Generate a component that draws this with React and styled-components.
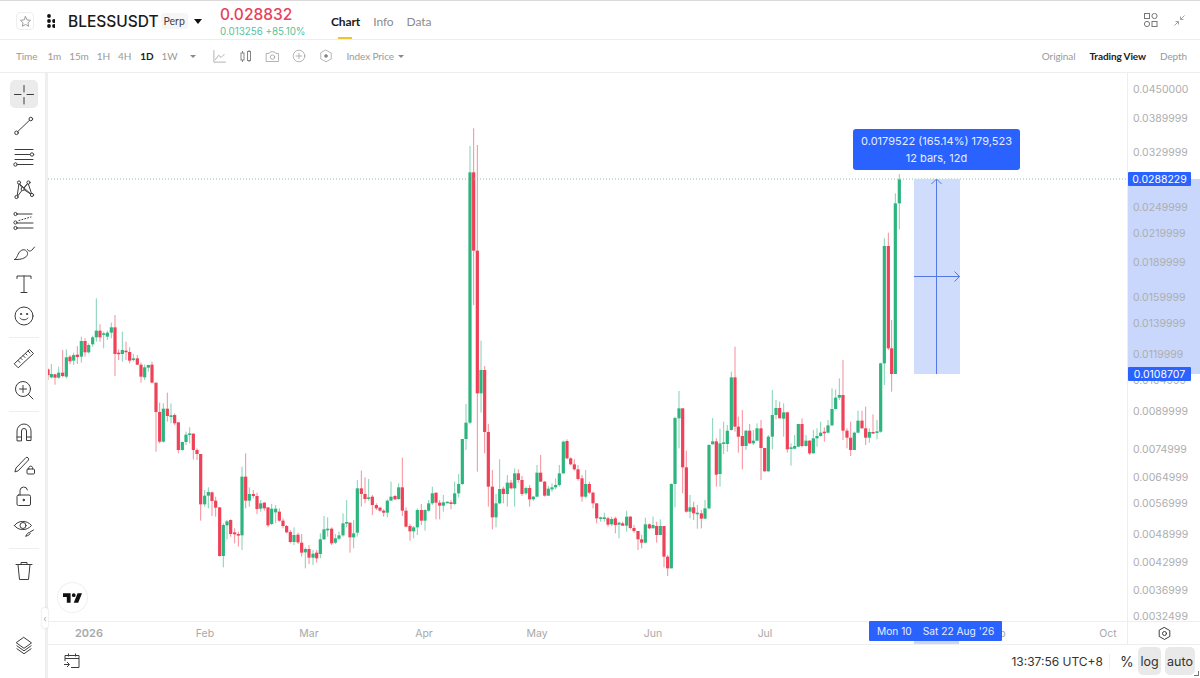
import React from 'react';
import styled, { createGlobalStyle } from 'styled-components';

const GlobalStyle = createGlobalStyle`
  html, body { margin: 0; padding: 0; background: #fff; }
  body { font-family: Inter, "Noto Sans", sans-serif; color: #222; }
  * { box-sizing: border-box; }
`;

const GREEN = '#2eb57f';
const RED = '#ef4258';
const BLUE = '#2962ff';

// candle rows read off the chart: [x, colour, wick top, body top, body bottom, wick bottom]
// each block has its own origin and is stored at 3x, so px = origin + value / 3
const BLOCKS = [
  {
    ox: 48,
    oy: 290,
    rows: [
      [0,'r',235,238,255,270],[10,'g',222,252,262,265],[21,'r',252,253,263,284],[32,'g',230,248,263,266],
      [44,'r',180,248,258,262],[55,'g',178,202,260,265],[66,'r',195,200,214,222],[77,'g',188,195,212,225],
      [88,'r',168,194,201,222],[100,'g',140,153,200,218],[111,'r',145,153,187,200],[122,'g',160,165,187,190],
      [134,'g',137,142,163,170],[145,'g',25,122,142,155],[156,'r',103,122,142,155],[167,'g',125,130,133,175],
      [178,'g',122,128,140,150],[190,'g',98,112,128,145],[201,'r',75,112,192,258],[212,'r',178,188,192,210],
      [223,'g',125,180,192,215],[234,'r',155,182,186,210],[245,'r',172,186,212,220],[256,'g',192,205,210,215],
      [268,'r',195,205,224,225],[279,'r',218,224,260,278],[290,'g',224,232,262,270],[301,'g',224,225,233,245],
      [312,'r',215,224,278,280],[324,'r',278,278,366,485],[335,'r',338,366,455,460],[346,'g',340,356,455,458],
      [358,'r',308,356,378,395],[369,'g',340,376,378,400],[380,'r',370,375,400,405],[391,'r',396,397,480,490],
      [403,'g',455,456,480,482],[414,'g',425,434,456,465],[425,'g',412,430,432,460],[436,'r',430,431,480,508],
      [447,'r',475,480,492,510],[458,'r',492,492,643,692],[470,'g',600,617,643,650],[481,'g',592,606,617,655],
      [492,'r',605,607,633,678],[503,'r',620,632,653,680],[515,'r',652,652,798,800],[526,'g',700,705,798,832],
      [537,'g',690,694,706,748],[548,'r',688,690,732,740],[560,'r',715,727,733,760],[571,'r',725,732,735,770],
      [582,'g',530,560,736,780],[593,'r',490,560,632,655],[604,'g',592,612,632,650],[616,'r',600,612,618,625],
      [627,'r',608,618,657,672],[638,'g',630,640,656,665],[649,'r',636,638,655,662],[660,'r',652,652,706,712],
      [671,'g',642,656,702,705],[683,'g',645,656,667,700],[694,'r',655,665,692,695],[705,'r',685,692,708,715],
      [716,'r',705,708,727,730],[727,'r',720,726,756,760],[738,'g',712,735,756,765],[750,'r',728,734,757,762],
      [761,'r',732,758,788,800],[772,'g',772,777,787,835],[783,'r',765,777,803,822],[795,'g',780,791,803,825],
      [806,'r',780,788,805,818],[817,'g',730,748,792,805],[828,'g',678,718,748,750],[839,'g',682,716,718,740],
      [851,'r',712,716,760,765],[862,'g',732,745,758,762],[873,'g',725,736,746,750],[885,'g',670,700,736,740],
      [896,'g',630,696,698,712],
    ],
  },
  {
    ox: 340,
    oy: 120,
    rows: [
      [30,'r',1208,1208,1252,1298],[41,'g',1200,1240,1252,1285],[52,'g',1080,1105,1238,1250],[64,'r',1052,1105,1122,1160],
      [75,'r',1072,1122,1137,1150],[86,'g',1077,1132,1136,1142],[97,'r',1125,1130,1155,1185],[109,'r',1150,1155,1165,1170],
      [120,'r',1160,1163,1172,1175],[131,'r',1168,1172,1178,1190],[142,'g',1138,1142,1178,1192],[153,'g',1085,1130,1142,1142],
      [165,'r',1125,1128,1138,1140],[176,'g',1090,1102,1137,1140],[187,'r',1013,1102,1172,1188],[198,'r',1162,1172,1220,1222],
      [210,'r',1212,1218,1234,1262],[221,'g',1218,1222,1234,1255],[232,'g',1165,1170,1222,1245],[244,'r',1152,1170,1202,1215],
      [255,'g',1168,1170,1202,1232],[266,'g',1140,1150,1172,1175],[277,'g',1100,1120,1150,1155],[288,'r',1118,1118,1148,1198],
      [299,'r',1140,1148,1157,1198],[310,'g',1125,1147,1157,1175],[322,'g',1145,1145,1148,1150],[333,'r',1140,1147,1152,1168],
      [344,'g',1085,1120,1152,1155],[356,'g',1062,1092,1120,1132],[367,'g',957,957,1092,1095],[378,'g',852,908,957,990],
      [390,'g',78,157,908,912],[401,'r',25,157,392,555],[412,'r',75,392,820,1055],[423,'g',662,750,820,878],
      [434,'r',738,750,936,1000],[445,'r',912,936,1100,1160],[457,'r',1050,1100,1192,1228],[468,'g',1122,1150,1192,1222],
      [479,'g',1018,1107,1150,1152],[490,'r',1100,1106,1122,1150],[502,'g',1065,1088,1122,1160],[513,'r',1080,1088,1105,1108],
      [524,'g',1045,1060,1105,1160],[535,'r',1048,1060,1080,1088],[546,'r',1068,1080,1122,1128],[558,'g',1100,1104,1120,1125],
      [569,'r',1095,1104,1138,1160],[580,'g',1128,1130,1138,1142],[591,'g',1035,1058,1130,1132],[602,'r',1005,1058,1085,1085],
      [614,'r',1083,1085,1127,1130],[625,'g',1098,1106,1127,1128],[636,'g',1090,1102,1108,1115],[647,'g',1075,1095,1102,1108],
      [658,'g',1035,1060,1095,1100],[670,'g',962,965,1060,1062],[681,'r',958,963,1015,1018],[692,'r',1012,1015,1033,1036],
      [703,'r',1018,1033,1048,1052],[714,'r',1035,1048,1077,1082],[726,'r',1065,1075,1130,1145],[737,'g',1050,1092,1130,1135],
      [748,'r',1085,1092,1118,1122],[759,'r',1115,1118,1150,1165],[770,'r',1150,1150,1195,1210],[782,'g',1190,1192,1196,1205],
      [793,'g',1178,1192,1197,1205],[804,'r',1190,1195,1214,1220],[815,'g',1190,1197,1213,1218],[826,'r',1190,1195,1215,1240],
      [837,'g',1205,1208,1214,1255],[848,'r',1205,1210,1217,1218],[860,'g',1172,1190,1217,1235],[871,'r',1188,1190,1224,1228],
      [882,'r',1215,1224,1233,1238],[894,'r',1233,1233,1258,1290],
    ],
  },
  {
    ox: 620,
    oy: 170,
    rows: [
      [65,'r',1095,1108,1118,1135],[76,'g',1043,1063,1118,1120],[88,'r',1060,1063,1075,1078],[99,'g',1040,1065,1075,1070],
      [110,'r',1055,1068,1095,1118],[121,'g',1048,1068,1095,1095],[132,'r',1068,1068,1160,1192],[143,'r',1155,1160,1195,1218],
      [154,'g',940,942,1195,1195],[165,'g',740,744,942,1012],[177,'g',663,715,745,835],[188,'r',715,715,892,970],
      [199,'r',842,892,1025,1028],[210,'g',975,1012,1025,1045],[221,'r',995,1012,1030,1050],[232,'g',1005,1028,1031,1076],
      [244,'r',1020,1030,1046,1075],[255,'g',990,1015,1046,1048],[267,'g',822,825,1015,1018],[278,'g',744,814,823,823],
      [289,'r',805,814,914,950],[300,'g',776,820,912,950],[311,'g',755,817,820,852],[322,'g',765,782,822,845],
      [334,'g',605,622,780,782],[345,'r',530,622,770,785],[355,'r',740,770,800,848],[367,'r',720,798,828,898],
      [378,'g',780,782,828,840],[389,'r',762,782,820,822],[400,'g',780,812,820,825],[411,'g',760,775,812,812],
      [423,'r',750,775,834,930],[434,'r',834,834,904,905],[445,'g',795,800,904,905],[457,'g',660,735,800,838],
      [468,'g',690,714,735,748],[479,'r',695,714,745,745],[491,'g',700,727,746,800],[502,'r',725,727,838,848],
      [513,'g',820,832,836,887],[524,'g',795,828,836,838],[535,'g',762,762,830,830],[546,'r',745,762,828,832],
      [558,'g',795,812,828,830],[569,'r',810,812,850,855],[580,'g',780,805,850,850],[591,'g',775,798,805,830],
      [602,'g',755,788,798,800],[613,'r',772,785,788,815],[624,'g',750,766,788,790],[636,'g',655,717,766,768],
      [647,'g',658,683,717,718],[658,'g',625,675,683,690],[669,'r',570,675,782,810],[681,'r',775,782,803,835],
      [692,'r',755,803,840,858],[703,'g',785,788,840,840],[714,'g',722,752,788,790],[726,'r',722,752,775,775],
      [737,'r',710,775,803,825],[748,'g',775,786,803,818],[759,'r',733,786,789,790],[771,'g',750,784,788,808],
      [782,'g',578,580,785,788],[793,'g',205,228,580,645],[805,'r',188,228,535,540],[815,'r',450,535,612,665],
      [826,'g',70,100,612,612],[838,'g',12,28,100,178],
    ],
  },
];

const CANDLES = BLOCKS.flatMap(({ ox, oy, rows }) =>
  rows.map(([x, c, wt, bt, bb, wb]) => ({
    x: ox + x / 3,
    color: c === 'g' ? GREEN : RED,
    wickTop: oy + wt / 3,
    top: oy + bt / 3,
    bottom: oy + bb / 3,
    wickBottom: oy + wb / 3,
  })),
);

const PRICE_TICKS = [
  ['0.0450000', 89], ['0.0389999', 118], ['0.0329999', 152], ['0.0249999', 207], ['0.0219999', 233],
  ['0.0189999', 262], ['0.0159999', 297], ['0.0139999', 323], ['0.0119999', 354], ['0.0104999', 380],
  ['0.0089999', 411], ['0.0074999', 449], ['0.0064999', 477], ['0.0056999', 503], ['0.0048999', 534],
  ['0.0042999', 562], ['0.0036999', 590], ['0.0032499', 616],
];

const TIME_TICKS = [
  ['Feb', 205], ['Mar', 309], ['Apr', 424], ['May', 537], ['Jun', 653], ['Jul', 765], ['Sep', 996], ['Oct', 1108],
];

const Page = styled.div`
  width: 1200px;
  height: 678px;
  display: flex;
  flex-direction: column;
  overflow: hidden;
  background: #fff;
  border-top: 1px solid #d9d9d9;
`;

const TopBar = styled.header`
  height: 39px;
  flex: none;
  display: flex;
  align-items: center;
  padding: 0 15px 0 16px;
  border-bottom: 1px solid #eee;
`;

const SymbolGroup = styled.div`
  width: 204px;
  display: flex;
  align-items: center;
  padding-top: 2px;
`;

const StarBox = styled.button`
  width: 18px;
  height: 18px;
  padding: 0;
  display: flex;
  align-items: center;
  justify-content: center;
  background: #fff;
  border: 1px solid #eee;
  border-radius: 4px;
  color: #888;
`;

const SymbolName = styled.span`
  font-size: 15.5px;
  font-weight: 500;
  color: #1a1a1a;
  margin-left: 13px;
`;

const PerpPill = styled.span`
  width: 27px;
  margin-left: 2px;
  padding: 2px 0;
  text-align: center;
  background: #f6f6f6;
  border-radius: 3px;
  font-family: Lato, sans-serif;
  font-size: 10.5px;
  color: #444;
`;

const DownCaret = styled.span`
  margin-left: ${(p) => p.$gap || 6}px;
  width: 0;
  height: 0;
  border-left: ${(p) => p.$size || 4}px solid transparent;
  border-right: ${(p) => p.$size || 4}px solid transparent;
  border-top: ${(p) => p.$size || 5}px solid ${(p) => p.$color || '#111'};
`;

const PriceBlock = styled.div`
  width: 111px;
  display: flex;
  flex-direction: column;
  gap: 1px;
  margin-top: 1px;
`;

const LastPrice = styled.span`
  font-size: 15.5px;
  line-height: 21px;
  font-weight: 500;
  color: #e8415a;
`;

const Change = styled.span`
  font-size: 9.8px;
  line-height: 12px;
  color: #58c29a;
`;

const Tabs = styled.nav`
  display: flex;
  gap: 13px;
  align-self: stretch;
`;

const Tab = styled.span`
  position: relative;
  display: flex;
  align-items: center;
  margin-top: 3px;
  font-family: Lato, sans-serif;
  font-size: 12px;
  letter-spacing: -0.1px;
  font-weight: ${(p) => (p.$active ? 700 : 400)};
  color: ${(p) => (p.$active ? '#1a1a1a' : '#8b8b8b')};

  ${(p) =>
    p.$active &&
    `&::after {
      content: '';
      position: absolute;
      left: 7px;
      right: 8px;
      bottom: 0;
      height: 2px;
      background: #f2c230;
    }`}
`;

const TopActions = styled.div`
  margin-left: auto;
  display: flex;
  align-items: center;
  gap: 16px;
  color: #777;
`;

const ToolRow = styled.div`
  height: 33px;
  flex: none;
  display: flex;
  align-items: center;
  padding: 0 13px 0 16px;
  border-bottom: 1px solid #eee;
  font-family: Lato, sans-serif;
  font-size: 10px;
  letter-spacing: -0.1px;
  color: #9a9a9a;
`;

const RowItem = styled.span`
  margin-left: ${(p) => p.$left || 0}px;
  font-weight: ${(p) => (p.$active ? 700 : 400)};
  color: ${(p) => (p.$active ? '#222' : 'inherit')};
  display: flex;
  align-items: center;
`;

const RowIcon = styled(RowItem)`
  color: #858585;
`;

const ViewSwitch = styled.div`
  margin-left: auto;
  display: flex;
  gap: 14px;
`;

const Main = styled.div`
  flex: 1;
  min-height: 0;
  display: flex;
`;

const ToolRail = styled.aside`
  width: 48px;
  flex: none;
  display: flex;
  flex-direction: column;
  gap: 3.7px;
  padding: 7px 0 19px 10px;
  position: relative;
  border-right: 3px solid #efefef;
  color: #3c3c3c;
`;

const ToolButton = styled.button`
  width: 28px;
  height: 28px;
  flex: none;
  padding: 0;
  border: 0;
  border-radius: 5px;
  display: flex;
  align-items: center;
  justify-content: center;
  color: inherit;
  background: ${(p) => (p.$active ? '#ebebeb' : 'transparent')};
  margin-top: ${(p) => (p.$pushDown ? 'auto' : 0)};
`;

const RailDivider = styled.hr`
  width: 30px;
  height: 1px;
  flex: none;
  margin: 3px 0 3px -1px;
  border: 0;
  background: #eee;
`;

const CollapseTab = styled.span`
  position: absolute;
  right: -3px;
  top: 535px;
  width: 6px;
  height: 20px;
  display: flex;
  align-items: center;
  justify-content: center;
  background: #fff;
  border-radius: 2px;
  box-shadow: 0 0 2px #ccc;
  font-size: 9px;
  line-height: 1;
  color: #aaa;
`;

const Workspace = styled.div`
  flex: 1;
  min-width: 0;
  display: flex;
  flex-direction: column;
`;

const ChartRow = styled.div`
  height: 548px;
  flex: none;
  display: flex;
`;

const ChartPane = styled.div`
  flex: 1;
  min-width: 0;
  position: relative;
`;

const ChartSvg = styled.svg`
  display: block;
  width: 100%;
  height: 100%;
`;

const MeasureTip = styled.div`
  position: absolute;
  left: 805px;
  top: 56px;
  width: 167px;
  height: 41px;
  display: flex;
  flex-direction: column;
  align-items: center;
  justify-content: center;
  gap: 3px;
  background: ${BLUE};
  border-radius: 3px;
  font-size: 11px;
  line-height: 14px;
  color: #e6edff;
`;

const LogoBadge = styled.div`
  position: absolute;
  left: 10px;
  top: 510px;
  width: 29px;
  height: 29px;
  display: flex;
  align-items: center;
  justify-content: center;
  background: #fff;
  border-radius: 50%;
  box-shadow: 0 0 0 1px #f0f0f0;
`;

const PriceAxis = styled.div`
  width: 73px;
  flex: none;
  position: relative;
  border-left: 1px solid #ededed;
`;

const MeasureBand = styled.div`
  position: absolute;
  left: 0;
  right: 0;
  top: 106px;
  height: 195px;
  background: #c8d7fb;
`;

const PriceTick = styled.span`
  position: absolute;
  left: 5px;
  transform: translateY(-50%);
  font-size: 10.5px;
  line-height: 12px;
  color: #aeaeae;
`;

const PriceTag = styled.span`
  position: absolute;
  left: 0;
  width: 63px;
  height: 14px;
  display: flex;
  align-items: center;
  justify-content: center;
  transform: translateY(-50%);
  background: ${BLUE};
  border-radius: 1px;
  font-size: 10.5px;
  color: #fff;
`;

const TimeAxis = styled.div`
  height: 24px;
  flex: none;
  position: relative;
  border-top: 1px solid #eee;
  border-bottom: 1px solid #eee;
  font-size: 10.5px;
  color: #a8a8a8;
`;

const TimeTick = styled.span`
  position: absolute;
  top: 5px;
  line-height: 13px;
  transform: translateX(-50%);
  font-weight: ${(p) => (p.$strong ? 600 : 400)};
  font-size: ${(p) => (p.$strong ? 11 : 10.5)}px;
`;

const TimeBadge = styled.div`
  position: absolute;
  left: 821px;
  top: -1px;
  width: 133px;
  height: 20px;
  display: flex;
  align-items: center;
  gap: 11px;
  padding-left: 8px;
  background: ${BLUE};
  border-radius: 1px;
  color: #e6edff;
  font-size: 10.2px;
`;

const TimeStrip = styled.div`
  position: absolute;
  left: 866px;
  top: 19px;
  width: 45px;
  height: 3px;
  background: #c8d7fb;
`;

const AxisCorner = styled.div`
  position: absolute;
  right: 0;
  top: 0;
  bottom: 0;
  width: 73px;
  display: flex;
  align-items: center;
  justify-content: center;
  background: #fff;
  border-left: 1px solid #ededed;
  color: #333;
`;

const BottomBar = styled.footer`
  flex: 1;
  display: flex;
  align-items: center;
  padding: 0 5px 1px 15px;
  position: relative;
  color: #3c3c3c;
`;

const Clock = styled.span`
  margin-left: auto;
  font-size: 12px;
  color: #333;
  padding-right: 6px;
  border-right: 1px solid #f0f0f0;
`;

const Percent = styled.span`
  width: 11px;
  margin: 0 7px 0 10px;
  font-size: 14px;
  color: #333;
`;

const ScaleButton = styled.span`
  width: ${(p) => p.$width}px;
  height: 28px;
  margin-left: ${(p) => p.$left || 0}px;
  display: flex;
  align-items: center;
  justify-content: center;
  background: #e9e9e9;
  border-radius: 5px;
  font-size: 12.5px;
  color: #333;
`;

const ResizeCorner = styled.span`
  position: absolute;
  right: 1px;
  bottom: 2px;
  width: 5px;
  height: 5px;
  border-right: 1px solid #777;
  border-bottom: 1px solid #777;
`;

const Glyph = ({ size = 24, w = 1, children }) => (
  <svg width={size} height={size} viewBox="0 0 24 24" fill="none" stroke="currentColor" strokeWidth={w} strokeLinecap="round" strokeLinejoin="round">
    {children}
  </svg>
);

const TOOL_ICONS = {
  crosshair: (
    <path d="M2.5 12.5h6.5M15 12.5h6.5M12 3.5v6.5M12 15.5v6.5" />
  ),
  line: (
    <>
      <circle cx="4.5" cy="18.8" r="1.8" />
      <circle cx="18.8" cy="5" r="1.8" />
      <path d="M5.8 17.5 17.5 6.3" />
    </>
  ),
  lines: (
    <>
      <path d="M3 4.5h18M3 9.5h15M3 14.5h18M5 19.5h16" />
      <circle cx="20" cy="9.5" r="1.7" fill="#fff" />
      <circle cx="3.5" cy="19.5" r="1.7" fill="#fff" />
    </>
  ),
  pattern: (
    <>
      <path d="M5 20 7 6.5l4 5.5 5-6 4 12-9-6-6 8M7 6.5 20 18M11 12l5-6" />
      <circle cx="4.5" cy="20" r="1.6" fill="#fff" />
      <circle cx="7" cy="5.5" r="1.6" fill="#fff" />
      <circle cx="10.7" cy="12" r="1.6" fill="#fff" />
      <circle cx="16.5" cy="5.5" r="1.6" fill="#fff" />
      <circle cx="20" cy="18" r="1.6" fill="#fff" />
    </>
  ),
  fib: (
    <>
      <path d="M4 5h16M4 14h17M4 19h17" />
      <path d="M7 11.5 19 8" strokeDasharray="1 2" />
      <circle cx="3.5" cy="5" r="1.6" fill="#fff" />
      <circle cx="3.5" cy="13.5" r="1.6" fill="#fff" />
      <circle cx="3.5" cy="19" r="1.6" fill="#fff" />
    </>
  ),
  brush: (
    <>
      <path d="M2.5 19.5c2 0 3-5 5-7.5 2-2.5 5-3 7-1 2 2 1 5-1.5 6.5-3 2-7 2-10.500 2z" />
      <path d="M15.500 9.500c1 2 3 2 4.500.5l2.500-3" />
    </>
  ),
  text: (
    <path d="M5 6.500V4h14v2.500M12 4v16.500M9 20.500h6" />
  ),
  smile: (
    <>
      <circle cx="12" cy="12" r="9" />
      <path d="M8 14c1.500 2.500 6.500 2.500 8 0" />
      <circle cx="9" cy="10" r=".6" fill="currentColor" />
      <circle cx="15" cy="10" r=".6" fill="currentColor" />
    </>
  ),
  ruler: (
    <>
      <path d="M2.500 17.500 17.500 3.500l4 4-15 14z" />
      <path d="M6 14.500l2 2M8.500 12l1.500 1.500M11 9.500l2 2M13.500 7.500 15 9M16 5l2 2" />
    </>
  ),
  zoom: (
    <>
      <circle cx="11" cy="11" r="7.500" />
      <path d="M7.500 11h7M11 7.500v7M16.500 16.500l4.500 4.500" />
    </>
  ),
  magnet: (
    <>
      <path d="M5 20.500V11a7 7 0 0 1 14 0v9.500h-4.500V11a2.500 2.500 0 0 0-5 0v9.500z" />
      <path d="M5 17h4.500M14.500 17H19" />
    </>
  ),
  pencilLock: (
    <>
      <path d="M3 19.500 4 16 14 5.500c1-1 3.500 1 2.500 2.500L6.500 18.500z" />
      <rect x="15" y="17" width="7.500" height="5" rx="1" />
      <path d="M16.800 17v-1.500a2 2 0 0 1 3.800 0V17" />
    </>
  ),
  lock: (
    <>
      <rect x="5" y="11" width="13.500" height="10.500" rx="1.500" />
      <path d="M8 11V6.500a3.800 3.800 0 0 1 7.500-.5" />
      <circle cx="11.700" cy="16" r=".8" fill="currentColor" />
    </>
  ),
  eye: (
    <>
      <path d="M2.500 10.500C6 5 15 5 19.500 10.500 15 16 6 16 2.500 10.500z" />
      <circle cx="11" cy="10.500" r="3" />
      <path d="M14 21c1-2 1.500-3 3-3.500 1 0 1.500 1 .5 2-1 1-2.500 1.500-3.500 1.500zM18 17l3.500-2" />
    </>
  ),
  trash: (
    <>
      <path d="M4 6.500h16M9 6.500V4.500h6v2M6 6.500l1.500 15h9l1.500-15" />
    </>
  ),
  layers: (
    <>
      <path d="m12 3 9 6.500-9 6.500-9-6.500z" strokeWidth="1.200" />
      <path d="m3.500 13 8.500 6 8.500-6M3.500 16.500l8.500 6 8.500-6" strokeWidth="1.200" />
    </>
  ),
};

const RAIL = [
  ['crosshair'], ['line'], ['lines'], ['pattern'], ['fib'], ['brush'], ['text'], ['smile'], null,
  ['ruler'], ['zoom'], null,
  ['magnet'], ['pencilLock'], ['lock'], ['eye'], null,
  ['trash'],
];

const Candles = () => (
  <g>
    {CANDLES.map((c) => (
      <g key={c.x}>
        <line x1={c.x} x2={c.x} y1={c.wickTop} y2={c.wickBottom} stroke={c.color} strokeOpacity="0.6" />
        <rect x={c.x - 1.6} y={c.top} width="3.2" height={Math.max(c.bottom - c.top, 1.6)} fill={c.color} />
      </g>
    ))}
  </g>
);

const PriceChart = () => (
  <ChartSvg viewBox="48 73 1079 548">
    <Candles />
    <line x1="48" x2="1127" y1="179" y2="179" stroke="#7fc4ab" strokeDasharray="1 2" />
    <rect x="914" y="179" width="46" height="195" fill="#cfdcfb" />
    <path d="M936.500 374V179.500M931.500 184l5-5 5 5M914 276.500h45.500M954.500 271.500l5 5-5 5" fill="none" stroke="#5477e6" strokeWidth="1" />
  </ChartSvg>
);

const App = () => (
  <Page>
    <GlobalStyle />
    <TopBar>
      <SymbolGroup>
        <StarBox>
          <Glyph size={13}>
            <path d="m12 3 2.800 6 6.500.8-4.800 4.500 1.300 6.500L12 17.500 6.200 20.800l1.300-6.500L2.700 9.800l6.500-.8z" strokeWidth="1.500" />
          </Glyph>
        </StarBox>
        <svg width="8" height="14" viewBox="0 0 8 14" style={{ marginLeft: 13 }}>
          <circle cx="2" cy="2" r="1.900" fill="#111" />
          <circle cx="2" cy="7" r="1.900" fill="#111" />
          <circle cx="7" cy="7" r="1.900" fill="#111" />
          <circle cx="2" cy="12" r="1.900" fill="#111" />
          <circle cx="7" cy="12" r="1.900" fill="#111" />
        </svg>
        <SymbolName>BLESSUSDT</SymbolName>
        <PerpPill>Perp</PerpPill>
        <DownCaret />
      </SymbolGroup>
      <PriceBlock>
        <LastPrice>0.028832</LastPrice>
        <Change>0.013256 +85.10%</Change>
      </PriceBlock>
      <Tabs>
        <Tab $active>Chart</Tab>
        <Tab>Info</Tab>
        <Tab>Data</Tab>
      </Tabs>
      <TopActions>
        <svg width="14" height="14" viewBox="0 0 14 14" fill="none" stroke="currentColor">
          <rect x="0.500" y="0.500" width="5" height="5" />
          <circle cx="10.500" cy="3" r="2.600" />
          <circle cx="3" cy="11" r="2.600" />
          <rect x="8" y="8.500" width="5" height="5" />
        </svg>
        <svg width="11" height="11" viewBox="0 0 11 11" fill="none" stroke="#999" strokeWidth="0.900">
          <path d="M10.500.5 6.500 4.500M6.500 1.500v3h3M.5 10.500l4-4M4.500 9.500v-3h-3" />
        </svg>
      </TopActions>
    </TopBar>

    <ToolRow>
      <RowItem>Time</RowItem>
      <RowItem $left={10}>1m</RowItem>
      <RowItem $left={8}>15m</RowItem>
      <RowItem $left={8}>1H</RowItem>
      <RowItem $left={8}>4H</RowItem>
      <RowItem $left={9} $active>1D</RowItem>
      <RowItem $left={8}>1W</RowItem>
      <DownCaret $gap={13} $size={3} $color="#8a8a8a" />
      <RowIcon $left={16}>
        <Glyph size={15}>
          <path d="M3 2.500v18.500h18.500M5.500 17l5-7 4 3.500 5-5" />
        </Glyph>
      </RowIcon>
      <RowIcon $left={13}>
        <svg width="12" height="14" viewBox="0 0 12 14" fill="none" stroke="currentColor">
          <rect x="1" y="4" width="3" height="7" />
          <rect x="7.500" y="2.500" width="3" height="9" />
          <path d="M2.500 2v2M2.500 11v2M9 1v1.500M9 11.500V13" />
        </svg>
      </RowIcon>
      <RowIcon $left={13}>
        <Glyph size={15}>
          <path d="M2.500 7h4.500l2-2.500h6l2 2.500h4.500v13h-19z" />
          <circle cx="12" cy="13" r="3.500" />
        </Glyph>
      </RowIcon>
      <RowIcon $left={12}>
        <Glyph size={14}>
          <circle cx="12" cy="12" r="10" />
          <path d="M7 12h10M12 7v10" />
        </Glyph>
      </RowIcon>
      <RowIcon $left={13}>
        <Glyph size={14}>
          <path d="m12 2 9 5v10l-9 5-9-5V7z" />
          <circle cx="12" cy="12" r="2.500" fill="currentColor" />
        </Glyph>
      </RowIcon>
      <RowItem $left={13}>Index Price</RowItem>
      <DownCaret $gap={4} $size={3} $color="#8a8a8a" />
      <ViewSwitch>
        <span>Original</span>
        <RowItem $active>Trading View</RowItem>
        <span>Depth</span>
      </ViewSwitch>
    </ToolRow>

    <Main>
      <ToolRail>
        {RAIL.map((tool, i) =>
          tool ? (
            <ToolButton key={tool[0]} $active={tool[0] === 'crosshair'}>
              <Glyph>{TOOL_ICONS[tool[0]]}</Glyph>
            </ToolButton>
          ) : (
            <RailDivider key={i} />
          ),
        )}
        <ToolButton $pushDown>
          <Glyph size={20}>{TOOL_ICONS.layers}</Glyph>
        </ToolButton>
        <CollapseTab>‹</CollapseTab>
      </ToolRail>

      <Workspace>
        <ChartRow>
          <ChartPane>
            <PriceChart />
            <MeasureTip>
              <span>0.0179522 (165.14%) 179,523</span>
              <span>12 bars, 12d</span>
            </MeasureTip>
            <LogoBadge>
              <svg width="19" height="10" viewBox="2 6 30 15" fill="#111">
                <path d="M14 6H2v6h6v9h6V6zm12 15h-7l6-15h7l-6 15zm-7-9a3 3 0 1 0 0-6 3 3 0 0 0 0 6z" />
              </svg>
            </LogoBadge>
          </ChartPane>
          <PriceAxis>
            <MeasureBand />
            {PRICE_TICKS.map(([label, y]) => (
              <PriceTick key={label} style={{ top: y - 72 }}>{label}</PriceTick>
            ))}
            <PriceTag style={{ top: 106 }}>0.0288229</PriceTag>
            <PriceTag style={{ top: 301 }}>0.0108707</PriceTag>
          </PriceAxis>
        </ChartRow>

        <TimeAxis>
          <TimeTick $strong style={{ left: 41 }}>2026</TimeTick>
          {TIME_TICKS.map(([label, x]) => (
            <TimeTick key={label} style={{ left: x - 48 }}>{label}</TimeTick>
          ))}
          <TimeStrip />
          <TimeBadge>
            <span>Mon 10</span>
            <span>Sat 22 Aug '26</span>
          </TimeBadge>
          <AxisCorner>
            <Glyph size={15}>
              <path d="m12 2.500 8.500 4.800v9.400L12 21.500l-8.500-4.800V7.300z" strokeWidth="1.500" />
              <circle cx="12" cy="12" r="3.200" strokeWidth="1.500" />
            </Glyph>
          </AxisCorner>
        </TimeAxis>

        <BottomBar>
          <svg width="18" height="18" viewBox="0 0 18 18" fill="none" stroke="currentColor">
            <path d="M2 9V3.500h14v12H8M2 6.500h14M5.500 1.500v3M12.500 1.500v3M1 12.500h5M4 10l2.500 2.500L4 15" />
          </svg>
          <Clock>13:37:56 UTC+8</Clock>
          <Percent>%</Percent>
          <ScaleButton $width={23}>log</ScaleButton>
          <ScaleButton $width={30} $left={4}>auto</ScaleButton>
          <ResizeCorner />
        </BottomBar>
      </Workspace>
    </Main>
  </Page>
);

export default App;
